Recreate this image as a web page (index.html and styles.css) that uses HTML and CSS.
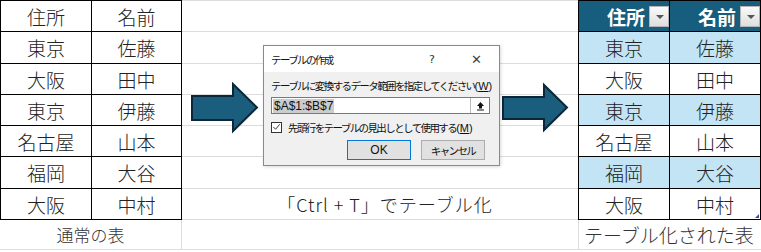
FILE: index.html
```html
<!DOCTYPE html>
<html lang="ja">
<head>
<meta charset="utf-8">
<link rel="stylesheet" href="styles.css">
</head>
<body>
<div class="sheet">
  <div class="side">
    <div class="grid plain">
      <div class="c">住所</div><div class="c">名前</div>
      <div class="c">東京</div><div class="c">佐藤</div>
      <div class="c">大阪</div><div class="c">田中</div>
      <div class="c">東京</div><div class="c">伊藤</div>
      <div class="c">名古屋</div><div class="c">山本</div>
      <div class="c">福岡</div><div class="c">大谷</div>
      <div class="c">大阪</div><div class="c">中村</div>
    </div>
    <div class="caption cap-left">通常の表</div>
  </div>

  <div class="mid">
    <div class="row r31"></div>
    <div class="row r32"></div>
    <div class="row r31"></div>
    <div class="row r31"></div>
    <div class="row r31"></div>
    <div class="row r32"></div>
    <div class="row r31 mid-cap">「Ctrl + T」でテーブル化</div>
    <div class="row r30"></div>
  </div>

  <div class="side right">
    <div class="grid styled">
      <div class="c head"><span>住所</span><span class="filter"></span></div>
      <div class="c head"><span>名前</span><span class="filter"></span></div>
      <div class="c band">東京</div><div class="c band">佐藤</div>
      <div class="c">大阪</div><div class="c">田中</div>
      <div class="c band">東京</div><div class="c band">伊藤</div>
      <div class="c">名古屋</div><div class="c">山本</div>
      <div class="c band">福岡</div><div class="c band">大谷</div>
      <div class="c">大阪</div><div class="c last">中村<span class="handle"></span></div>
    </div>
    <div class="caption cap-right">テーブル化された表</div>
  </div>

  <svg class="arrow arrow-1" width="70" height="52" viewBox="0 0 70 52">
    <polygon points="2,14 43,14 43,2 67,25.5 43,49 43,38 2,38" fill="#1b5d7d" stroke="#0c2838" stroke-width="2" stroke-linejoin="miter"/>
  </svg>
  <svg class="arrow arrow-2" width="70" height="52" viewBox="0 0 70 52">
    <polygon points="3,15 44,15 44,3 67,25.5 44,48 44,37 3,37" fill="#1b5d7d" stroke="#0c2838" stroke-width="2" stroke-linejoin="miter"/>
  </svg>

  <div class="dialog">
    <div class="dlg-title">
      <span class="dlg-name">テーブルの作成</span>
      <span class="dlg-help">?</span>
      <span class="dlg-close">✕</span>
    </div>
    <div class="dlg-body">
      <div class="dlg-label">テーブルに変換するデータ範囲を指定してください<span class="key">(<u>W</u>)</span></div>
      <div class="dlg-input">
        <span class="sel">$A$1:$B$7</span>
        <span class="pick">
          <svg width="9" height="10" viewBox="0 0 9 10"><path d="M4.5 1 L8 5 L6 5 L6 7.5 L3 7.5 L3 5 L1 5 Z" fill="#111"/><rect x="1" y="8.5" width="7" height="1" fill="#111"/></svg>
        </span>
      </div>
      <div class="dlg-check">
        <span class="box">
          <svg width="10" height="10" viewBox="0 0 10 10"><path d="M1.5 5 L4 7.5 L8.5 2" fill="none" stroke="#222" stroke-width="1"/></svg>
        </span>
        <span>先頭行をテーブルの見出しとして使用する<span class="key">(<u>M</u>)</span></span>
      </div>
      <div class="dlg-buttons">
        <span class="btn ok">OK</span>
        <span class="btn">キャンセル</span>
      </div>
    </div>
  </div>
</div>
</body>
</html>
```
FILE: styles.css
```css
html, body {
  margin: 0;
  padding: 0;
  background: #fff;
}
body {
  font-family: "Noto Sans CJK JP", "Noto Sans", sans-serif;
  color: #222;
}
.sheet {
  position: relative;
  width: 761px;
  height: 252px;
  display: flex;
  overflow: hidden;
}
.side {
  width: 182px;
  display: flex;
  flex-direction: column;
}
.side.right {
  width: 183px;
}
.grid {
  display: grid;
  background: #000;
  padding: 1px;
  gap: 1px;
  grid-template-rows: 30px 31px 30px 30px 30px 31px 30px;
}
.plain {
  grid-template-columns: 90px 89px;
}
.styled {
  grid-template-columns: 90px 90px;
}
.c {
  background: #fff;
  display: flex;
  align-items: center;
  justify-content: center;
  font-size: 19px;
  font-weight: 300;
  line-height: 1;
  color: #222;
}
.band {
  background: #c2e4f4;
}
.head {
  background: #175d7e;
  color: #fff;
  font-weight: bold;
  justify-content: flex-end;
  gap: 4px;
}
.filter {
  position: relative;
  width: 20px;
  height: 21px;
  box-sizing: border-box;
  border: 1px solid #b5b5b5;
  background: linear-gradient(#fafafa, #dedede);
}
.filter::after {
  content: "";
  position: absolute;
  left: 6px;
  top: 8px;
  border-left: 4px solid transparent;
  border-right: 4px solid transparent;
  border-top: 4px solid #555;
}
.last {
  position: relative;
}
.handle {
  position: absolute;
  right: 1px;
  bottom: 1px;
  width: 4px;
  height: 4px;
  background: #3e4fa3;
  clip-path: polygon(100% 0, 100% 100%, 0 100%);
}
.caption {
  height: 30px;
  box-sizing: border-box;
  border-bottom: 1px solid #dcdcdc;
  display: flex;
  align-items: center;
  font-weight: 300;
  color: #333;
}
.cap-left {
  justify-content: center;
  border-right: 1px solid #dcdcdc;
  font-size: 17px;
}
.cap-right {
  border-left: 1px solid #dcdcdc;
  padding-left: 5px;
  font-size: 19px;
  white-space: nowrap;
}
.mid {
  width: 396px;
  border-top: 1px solid #dcdcdc;
  display: flex;
  flex-direction: column;
}
.row {
  box-sizing: border-box;
  border-bottom: 1px solid #dcdcdc;
}
.r30 { height: 30px; }
.r31 { height: 31px; }
.r32 { height: 32px; }
.mid-cap {
  display: flex;
  align-items: center;
  justify-content: center;
  font-size: 18px;
  font-weight: 300;
  letter-spacing: 1px;
  color: #222;
  padding-left: 10px;
  white-space: nowrap;
}
.arrow {
  position: absolute;
  top: 82px;
}
.arrow-1 { left: 190px; }
.arrow-2 { left: 500px; }

.dialog {
  position: absolute;
  left: 263px;
  top: 45px;
  width: 237px;
  height: 121px;
  box-sizing: border-box;
  border: 1px solid #8a8a8a;
  background: #f0f0f0;
  box-shadow: 1px 1px 3px rgba(0,0,0,0.15);
  font-size: 10.5px;
  letter-spacing: -1.6px;
  color: #111;
  display: flex;
  flex-direction: column;
}
.key {
  letter-spacing: 0;
  font-family: "Liberation Sans", sans-serif;
  font-size: 11px;
}
.dlg-title {
  height: 26px;
  background: #fff;
  display: flex;
  align-items: center;
  padding-left: 7px;
}
.dlg-name { flex: 1; }
.dlg-help {
  width: 10px;
  margin-right: 32px;
  font-family: "DejaVu Sans", sans-serif;
  font-size: 11px;
  letter-spacing: 0;
  color: #333;
}
.dlg-close {
  width: 16px;
  margin-right: 12px;
  font-family: "DejaVu Sans", sans-serif;
  font-size: 13px;
  letter-spacing: 0;
  color: #444;
}
.dlg-body {
  padding: 7px 9px 0 7px;
  display: flex;
  flex-direction: column;
}
.dlg-label {
  height: 14px;
  line-height: 14px;
  white-space: nowrap;
}
.dlg-input {
  margin-top: 4px;
  height: 17px;
  box-sizing: border-box;
  border: 1px solid #7a7a7a;
  background: #fff;
  display: flex;
  align-items: center;
  justify-content: space-between;
  padding-left: 1px;
}
.sel {
  background: #cccccc;
  font-family: "Liberation Sans", sans-serif;
  font-size: 12px;
  letter-spacing: 0;
  line-height: 14px;
  padding: 0 1px;
}
.pick {
  width: 18px;
  height: 15px;
  border-left: 1px solid #bbb;
  display: flex;
  align-items: center;
  justify-content: center;
}
.dlg-check {
  margin-top: 7px;
  display: flex;
  align-items: center;
  gap: 6px;
  white-space: nowrap;
  height: 12px;
}
.box {
  width: 11px;
  height: 11px;
  box-sizing: border-box;
  border: 1px solid #333;
  background: #fff;
  display: flex;
  align-items: center;
  justify-content: center;
}
.dlg-buttons {
  margin-top: 7px;
  display: flex;
  justify-content: flex-end;
  gap: 10px;
  padding-right: 5px;
}
.btn {
  width: 64px;
  height: 20px;
  box-sizing: border-box;
  border: 1px solid #adadad;
  background: #e1e1e1;
  display: flex;
  align-items: center;
  justify-content: center;
}
.btn.ok {
  border: 1px solid #0078d7;
  font-family: "Liberation Sans", sans-serif;
  font-size: 12px;
  letter-spacing: 0;
}
```
